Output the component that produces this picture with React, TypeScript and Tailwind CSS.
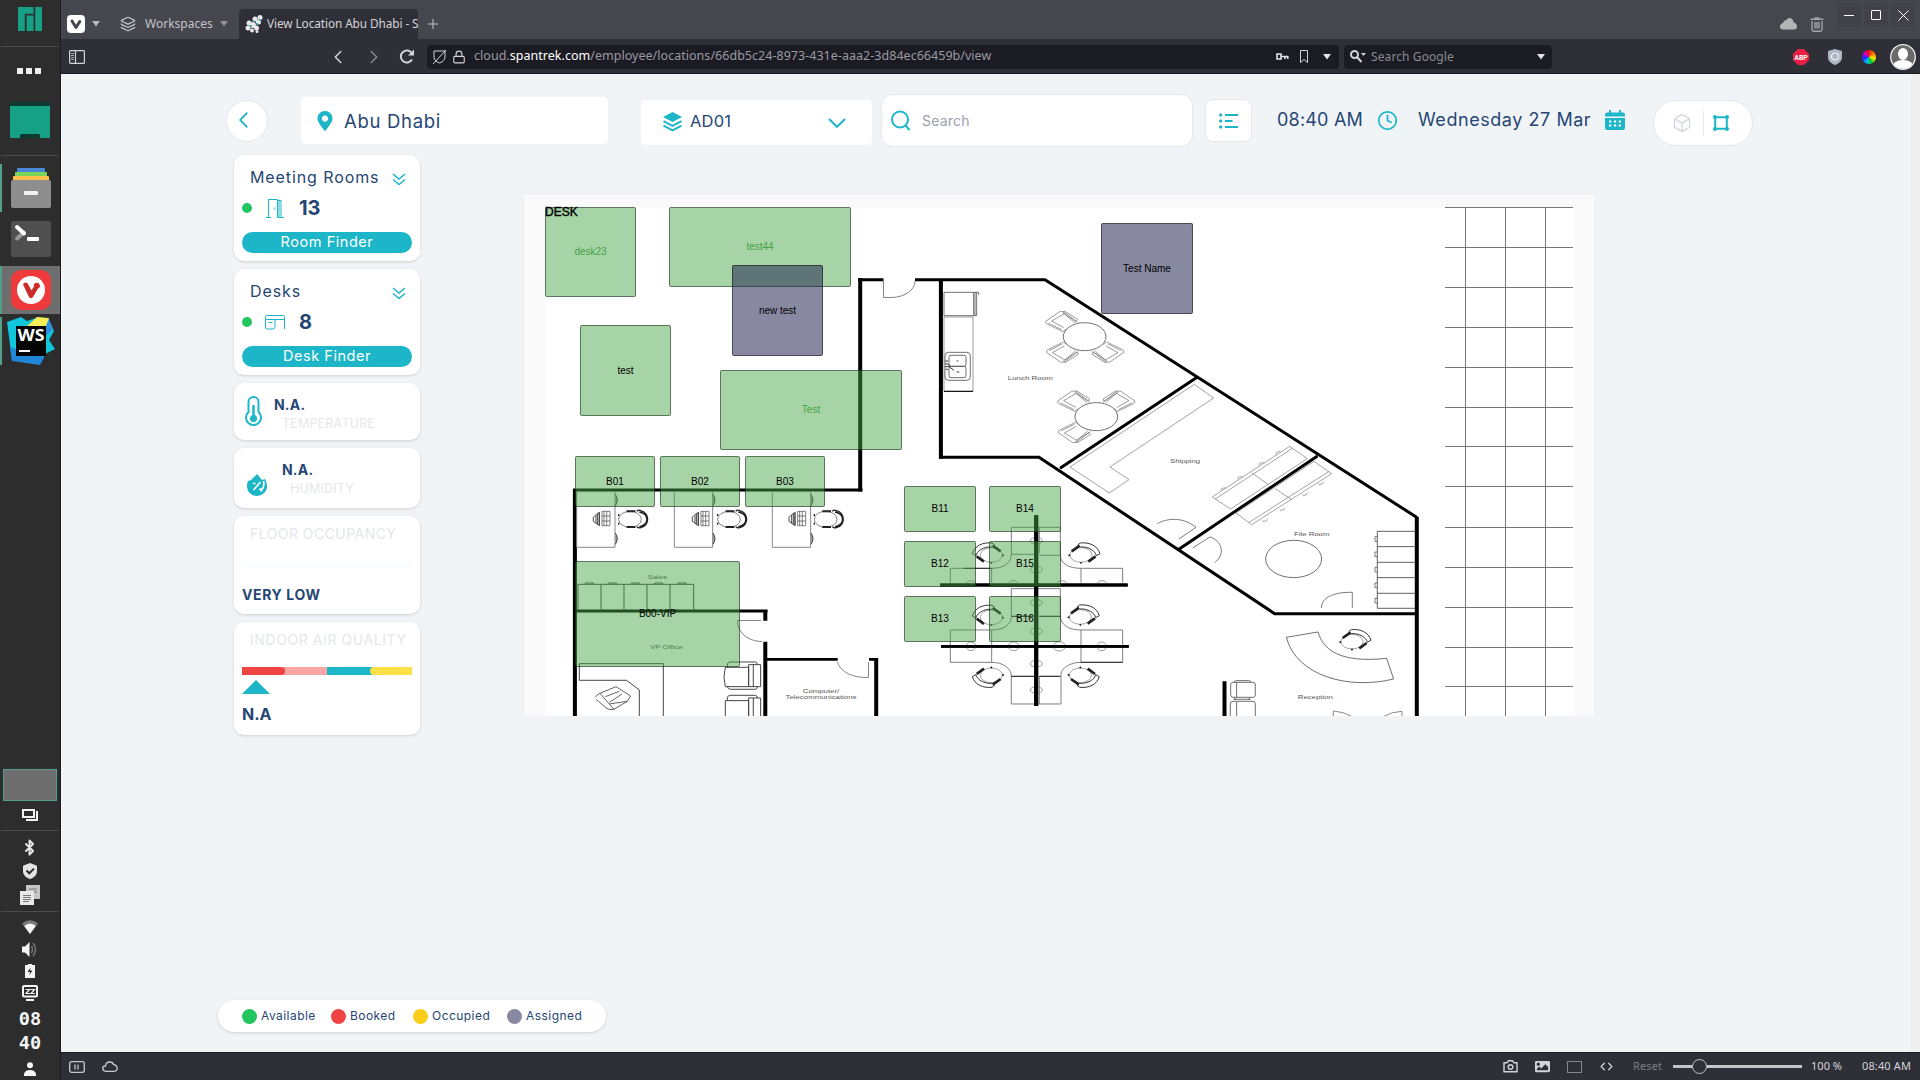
import React from "react";
import {
  Bluetooth,
  Box,
  ChevronLeft,
  ChevronRight,
  Clock,
  Code,
  Layers,
  Lock,
  Plus,
} from "lucide-react";
import { FaCamera, FaMapMarkerAlt, FaCloud, FaImage } from "react-icons/fa";

const TEAL = "#1cb6c8";

/* ---------- Desktop dock ---------- */

function DockSlot({ children, active, running }: { children: React.ReactNode; active?: boolean; running?: boolean }) {
  return (
    <div
      className={
        "flex h-12 w-full items-center justify-center border-l-2 " +
        (running ? "border-[#52a08c] " : "border-transparent ") +
        (active ? "bg-[#6e6e6e]" : "")
      }
    >
      {children}
    </div>
  );
}

function Rule() {
  return <div className="mx-px h-px shrink-0 bg-[#4b4b4b]" />;
}

function Dock() {
  return (
    <div className="flex w-[61px] shrink-0 flex-col border-r border-[#1c1c1c] bg-[#2d2d2d]">
      <div className="flex h-[46px] justify-center pt-[7px]">
        <svg width="24" height="24" viewBox="0 0 24 24" fill="#16a085">
          <path d="M0 0h15.500v6.700H6.800V24H0zM8.600 8.600h6.900V24H8.600zM17.200 0H24v24h-6.800z" />
        </svg>
      </div>
      <Rule />
      <div className="flex h-12 items-center justify-center gap-[3px] pr-[3px]">
        <i className="size-[6px] bg-[#eee]" />
        <i className="size-[6px] bg-[#eee]" />
        <i className="size-[6px] bg-[#eee]" />
      </div>
      <div className="flex h-[60px] justify-center pt-[7px]">
        <svg width="40" height="36" viewBox="0 0 40 36">
          <rect width="40" height="36" rx="1.500" fill="#0d3b31" />
          <path d="M0 4h40v31q0 1-1 1h-9v-3q0-1-1-1H11q-1 0-1 1v3H1q-1 0-1-1z" fill="#16a085" />
        </svg>
      </div>
      <Rule />
      <div className="mt-2 flex flex-col gap-[3px]">
        <DockSlot running>
          <svg width="40" height="41" viewBox="0 0 40 41">
            <rect x="6" width="28" height="8" rx="1" fill="#4a86d8" />
            <rect x="4" y="4" width="32" height="8" rx="1" fill="#7bd657" />
            <rect x="2" y="8" width="36" height="8" rx="1" fill="#fbc04b" />
            <rect y="12" width="40" height="28" rx="2" fill="#8e8e8e" />
            <rect x="13" y="23" width="14" height="4" rx="1" fill="#f2f2f2" />
          </svg>
        </DockSlot>
        <DockSlot>
          <svg width="40" height="36" viewBox="0 0 40 36">
            <rect width="40" height="36" rx="2" fill="#4f4f4f" />
            <path d="M6 17.500l7-6" stroke="#9a9a9a" strokeWidth="4" strokeLinecap="round" />
            <path d="M6 6l7 6.500" stroke="#fff" strokeWidth="4" strokeLinecap="round" />
            <rect x="16" y="16" width="12" height="4" rx="1" fill="#fff" />
          </svg>
        </DockSlot>
        <DockSlot running active>
          <svg width="40" height="40" viewBox="0 0 40 40">
            <rect width="40" height="40" rx="10" fill="#ee3a3a" />
            <circle cx="20" cy="20" r="14" fill="#fff" />
            <path d="M12 14.500q2-3.500 5-.5l3.500 6.500 2.500-4a3 3 0 1 1 4 2l-5 8.500q-2 2.500-4 0z" fill="#cf2b2b" />
          </svg>
        </DockSlot>
        <DockSlot running>
          <svg width="48" height="48" viewBox="0 0 48 48">
            <path d="M0 5L14 0l6 4 9-3 12 0 6 13-5 9 6 9-12 6-4 9-27-4z" fill="#0fc6dc" />
            <path d="M5 44L3 30l20 8 16-1-6 11z" fill="#2086d7" />
            <path d="M20 9l10-9 12 2 4 10-6 6z" fill="#2f8fd8" />
            <path d="M20 9l10-9 12 1-3 8z" fill="#f3ee56" />
            <rect x="9" y="9" width="30" height="30" fill="#050505" />
            <rect x="12" y="33" width="11" height="2" fill="#fff" />
            <text x="10.500" y="24" fontFamily="Open Sans" fontWeight="700" fontSize="15.500" textLength="27" lengthAdjust="spacingAndGlyphs" fill="#fff">WS</text>
          </svg>
        </DockSlot>
      </div>

      <div className="mt-auto flex flex-col">
        <div className="mx-[3px] h-8 border border-[#52a08c] bg-[#6e6e6e]" />
        <div className="flex h-[29px] items-center justify-center pb-[2px]">
          <svg width="16" height="12" viewBox="0 0 16 12" fill="none" stroke="#f4f4f4" strokeWidth="2">
            <path d="M1 1h11v7H1z" />
            <path d="M14 3h1v8H4" />
          </svg>
        </div>
        <Rule />
        <div className="mt-1 flex h-[76px] flex-col items-center">
          <div className="flex h-6 items-center pr-[2px]"><Bluetooth size={17} strokeWidth={2.800} color="#e4e4e4" /></div>
          <div className="flex h-6 items-center">
            <svg width="14" height="16" viewBox="0 0 14 16">
              <path d="M7 0l7 2.700V8c0 4-3 6.800-7 8-4-1.200-7-4-7-8V2.700z" fill="#e4e4e4" />
              <path d="M3.500 7.500l2.800 2.800 4.700-4.700" fill="none" stroke="#2d2d2d" strokeWidth="2" />
            </svg>
          </div>
          <div className="flex h-6 items-center">
            <svg width="20" height="20" viewBox="0 0 20 20">
              <path d="M6 0h14v14H6z" fill="#c4c4c4" />
              <path d="M0 6h14v14H0z" fill="#e8e8e8" />
              <path d="M9 4h8M14 7h3M3 10.500h8M3 12.500h8M3 14.500h8M3 16.500h6" stroke="#777" />
            </svg>
          </div>
        </div>
        <Rule />
        <div className="mt-1 flex flex-col items-center">
          <div className="flex h-[22px] items-center">
            <svg width="16" height="14" viewBox="0 0 16 14">
              <path d="M0 3.500Q8-3 16 3.500L8 14z" fill="#7a7a7a" />
              <path d="M2.200 6Q8 1 13.800 6L8 14z" fill="#f4f4f4" />
            </svg>
          </div>
          <div className="flex h-[22px] items-center">
            <svg width="16" height="15" viewBox="0 0 16 15">
              <path d="M0 4.500h3L7.500 0v15L3 10.500H0z" fill="#f4f4f4" />
              <path d="M9.500 4q2 3.500 0 7M11 1q5 6.500 0 13" fill="none" stroke="#777" strokeWidth="1.500" />
            </svg>
          </div>
          <div className="flex h-[22px] items-center">
            <svg width="10" height="14" viewBox="0 0 10 14">
              <path d="M3 0h4v1h3v13H0V1h3z" fill="#f4f4f4" />
              <path d="M5.500 3.500L2.500 8H5l-.5 3L7.500 6.500H5z" fill="#2d2d2d" />
            </svg>
          </div>
          <div className="flex h-[22px] items-center">
            <svg width="16" height="16" viewBox="0 0 16 16" fill="none" stroke="#f4f4f4">
              <rect x="1" y="1" width="14" height="10.500" rx="1" strokeWidth="2" />
              <path d="M3.500 4.500h4l-3.500 4h4M8.500 4.500h4l-3.500 4h4" strokeWidth="1.200" />
              <path d="M4 15h8" strokeWidth="2" />
            </svg>
          </div>
          <div className="flex h-[54px] flex-col items-center pt-[3px] font-['DejaVu_Sans_Mono',monospace] text-[18.500px] leading-[24px] font-bold text-[#f4f4f4]">
            <span>08</span>
            <span>40</span>
          </div>
          <div className="flex h-[22px] items-center pb-px">
            <svg width="12" height="14" viewBox="0 0 12 14" fill="#f4f4f4">
              <circle cx="6" cy="3.200" r="3" />
              <path d="M0 14v-2q1-4 6-4t6 4v2z" />
            </svg>
          </div>
        </div>
      </div>
    </div>
  );
}

/* ---------- Browser chrome ---------- */

function Caret({ color = "#b9b9bd" }: { color?: string }) {
  return (
    <svg width="8" height="6" viewBox="0 0 8 6" fill={color}>
      <path d="M0 0h8L4 5.500z" />
    </svg>
  );
}

function TabBar() {
  return (
    <div className="flex h-[39px] shrink-0 bg-[#46464e] text-[12px] text-[#c3c3c8]">
      <div className="flex h-full items-center pt-[9px] pl-[6px]">
        <svg width="18" height="18" viewBox="0 0 18 18">
          <rect width="18" height="18" rx="4" fill="#fff" />
          <path d="M5 6l4 6.500L12.800 6.500" fill="none" stroke="#46464e" strokeWidth="3" strokeLinecap="round" strokeLinejoin="round" />
        </svg>
        <span className="ml-[7px]"><Caret /></span>
      </div>
      <div className="flex h-full items-center pt-[9px] pl-[20px]">
        <Layers size={16} strokeWidth={1.900} />
        <span className="ml-[9px] w-[75px]">Workspaces</span>
        <Caret color="#8e8e94" />
      </div>
      <div className="mt-[9px] ml-[11px] flex h-[30px] w-[179px] items-center rounded-t bg-[#2f2f38] pl-[6px] whitespace-nowrap">
        <svg width="18" height="18" viewBox="0 0 18 18" fill="#e9e9e9" className="shrink-0">
          <circle cx="15" cy="2.500" r="2.500" /><circle cx="10" cy="4" r="2.500" /><circle cx="13.500" cy="7" r="2.500" />
          <circle cx="4" cy="8" r="2.500" /><circle cx="8" cy="10" r="3" /><circle cx="3" cy="13" r="2.500" />
          <circle cx="11.500" cy="13" r="2.500" /><circle cx="7" cy="15.500" r="2" /><circle cx="12" cy="16.500" r="1.500" />
          <g fill="#2aa7b8"><circle cx="8" cy="6" r="1" /><circle cx="12" cy="9" r="1" /><circle cx="6" cy="11" r="1" /><circle cx="15" cy="5" r="1" /></g>
        </svg>
        <span className="ml-1 text-[11.800px] tracking-[-0.08px] text-[#d4d4d8]">View Location Abu Dhabi - S</span>
      </div>
      <div className="flex items-center pt-[9px] pl-[7px]"><Plus size={16} strokeWidth={1.500} /></div>
      <div className="ml-auto flex items-start">
        <svg className="mt-[18px]" width="17" height="12" viewBox="0 0 17 12" fill="#b4b4b8"><path d="M3.500 11.500Q0 11.300 0 8.500 0 6 3 5 3.500 2 6 2.200 8-.5 11 .3q2.500 1 2.500 4Q17 5.500 17 8.500q0 3-3 3z" /></svg>
        <svg className="mt-[17px] ml-[13px]" width="14" height="15" viewBox="0 0 14 15" fill="none" stroke="#a4a4aa" strokeWidth="1.400"><path d="M.5 2.200h13M4.500 1h5M2 4v8.500q0 1.700 1.700 1.700h6.600q1.700 0 1.700-1.700V4M5 5v6.500M7 5v6.500M9 5v6.500" /></svg>
        <div className="mt-[3px] ml-[13px] flex gap-[3px] pr-[5px]">
          <div className="flex size-6 items-center justify-center rounded bg-[#414149]"><i className="h-px w-[10px] bg-white" /></div>
          <div className="flex size-6 items-center justify-center rounded bg-[#414149]"><i className="size-[10px] rounded-[1px] border border-white" /></div>
          <div className="flex size-6 items-center justify-center rounded bg-[#414149]">
            <svg width="11" height="11" viewBox="0 0 11 11" stroke="#fff"><path d="M.5.5l10 10M10.500.5l-10 10" /></svg>
          </div>
        </div>
      </div>
    </div>
  );
}

function AddressBar() {
  return (
    <div className="flex h-[35px] shrink-0 items-center border-b border-[#1b1b22] bg-[#2f2f38] pt-px text-[12px] text-[#d4d4d8]">
      <svg className="ml-2" width="16" height="14" viewBox="0 0 16 14" fill="none" stroke="#d4d4d8" strokeWidth="1.200">
        <rect x=".6" y=".6" width="14.800" height="12.800" rx="1" />
        <path d="M6.500 0v14" />
        <path d="M2 3.500h3M2 5.500h3M2 7.500h3M2 9.500h3" strokeWidth=".8" />
      </svg>
      <ChevronLeft className="ml-[242px]" size={22} strokeWidth={1.700} />
      <ChevronRight className="ml-[14px]" size={22} strokeWidth={1.700} color="#88888e" />
      <svg className="ml-[14px]" width="16" height="15" viewBox="0 0 16 15" fill="none" stroke="#d4d4d8" strokeWidth="2">
        <path d="M13 4.500A6 6 0 1 0 13 10.500" />
        <path d="M15 .5v6H9z" fill="#d4d4d8" stroke="none" />
      </svg>
      <div className="ml-[12px] flex h-6 w-[912px] items-center rounded-[4px] bg-[#1b1b24] pl-[6px]">
        <svg width="13" height="14" viewBox="0 0 13 14" fill="none" stroke="#d4d4d8">
          <path d="M1 1h11v6c0 3-2.500 5-5.500 6C3.500 12 1 10 1 7zM0 14L13 0" />
        </svg>
        <Lock className="ml-[6px]" size={14} strokeWidth={1.900} />
        <span className="ml-[8px] w-[802px] text-[12.500px] tracking-[0.03px] whitespace-nowrap text-[#9a9aa2]">
          cloud.<span className="text-white">spantrek.com</span>/employee/locations/66db5c24-8973-431e-aaa2-3d84ec66459b/view
        </span>
        <svg width="13" height="8" viewBox="0 0 13 8" fill="none" stroke="#e4e4e8" strokeWidth="1.600">
          <path d="M1 1h4v5H1zM5 3.500h7.500M9 3.500V6M11.800 3.500V6" />
        </svg>
        <svg className="ml-[11px]" width="8" height="13" viewBox="0 0 8 13" fill="none" stroke="#d4d4d8"><path d="M.5.500h7v12L4 9.500.5 12.500z" /></svg>
        <span className="ml-[15px]"><Caret color="#e4e4e8" /></span>
      </div>
      <div className="ml-[5px] flex h-6 w-[208px] items-center rounded-[4px] bg-[#1b1b24] pl-[6px]">
        <svg width="16" height="13" viewBox="0 0 16 13" fill="none" stroke="#d4d4d8" strokeWidth="2"><circle cx="4.500" cy="4.500" r="3.500" /><path d="M7 7l4.500 5" /><path d="M11 3h5l-2.500 3z" fill="#d4d4d8" stroke="none" /></svg>
        <span className="ml-[5px] w-[166px] tracking-[0.1px] text-[#8a8a92]">Search Google</span>
        <Caret color="#e4e4e8" />
      </div>
      <div className="ml-auto flex items-center pr-1">
        <svg width="16" height="16" viewBox="0 0 16 16"><path d="M5 0h6l5 5v6l-5 5H5l-5-5V5z" fill="#ed1e45" /><text x="1.300" y="10.700" fontSize="7.200" fontWeight="700" fontFamily="Roboto" textLength="13.500" lengthAdjust="spacingAndGlyphs" fill="#fff">ABP</text></svg>
        <svg className="ml-[19px]" width="14" height="16" viewBox="0 0 14 16"><path d="M7 0l7 2v6c0 4-3 6.500-7 8-4-1.500-7-4-7-8V2z" fill="#aeb7c4" /><circle cx="7" cy="7.500" r="3.500" fill="none" stroke="#f1f3f6" strokeWidth="1.200" /></svg>
        <div className="ml-[20px] size-[14px] rounded-full bg-[conic-gradient(#ee2222,#ff7700,#ffee00,#00cc22,#00bbff,#2222ff,#cc00cc,#ff0000)]" />
        <svg className="ml-[14px]" width="26" height="26" viewBox="0 0 26 26"><circle cx="13" cy="13" r="12.300" fill="#6a6a6a" stroke="#eee" strokeWidth="1.300" /><ellipse cx="13" cy="10" rx="5" ry="6" fill="#fff" /><path d="M3.500 20q3-4 9.500-4t9.500 4A12 12 0 0 1 3.500 20z" fill="#fff" /></svg>
      </div>
    </div>
  );
}

function StatusBar() {
  return (
    <div className="flex h-7 shrink-0 items-center border-t border-[#1b1b22] bg-[#2f2f38] text-[11px] text-[#d4d4d8]">
      <svg className="ml-2" width="16" height="12" viewBox="0 0 16 12" fill="none" stroke="#c8c8cc" strokeWidth="1.300"><rect x=".7" y=".7" width="14.600" height="10.600" rx="2" /><path d="M6 3.500v5M9 3.500v5" /></svg>
      <svg className="ml-[17px]" width="16" height="11" viewBox="0 0 16 11" fill="none" stroke="#c8c8cc" strokeWidth="1.300"><path d="M4 10.300Q.7 10 .7 7.500T3.500 5Q4 1 7.500 1T11.500 3.500Q15 4 15.200 7.500 15 10 12.500 10.300z" /></svg>
      <div className="ml-auto flex items-center pr-[9px]">
        <svg width="15" height="13" viewBox="0 0 15 13" fill="none" stroke="#d4d4d8" strokeWidth="1.400"><path d="M1 2.800h3l1.500-2h4l1.500 2h3v9H1z" /><circle cx="7.500" cy="7" r="2.300" /></svg>
        <FaImage className="ml-[17px]" size={15} />
        <i className="ml-[17px] h-[12px] w-[15px] border border-[#85858c]" />
        <Code className="ml-[18px]" size={13} strokeWidth={2.200} />
        <span className="ml-[20px] tracking-[0.1px] text-[#7d7d85]">Reset</span>
        <div className="ml-[11px] flex h-4 w-[129px] items-center">
          <i className="h-[3px] w-[19px] bg-[#c4c4c8]" />
          <i className="size-[15px] rounded-full border border-[#c4c4c8] bg-[#2f2f38]" />
          <i className="h-[3px] flex-1 bg-[#c4c4c8]" />
        </div>
        <span className="ml-[9px] w-[51px]">100 %</span>
        <span className="tracking-[0.12px]">08:40 AM</span>
      </div>
    </div>
  );
}

/* ---------- Location header ---------- */

function Header() {
  return (
    <div className="flex items-start pl-[165px] text-[#264674]">
      <button className="mt-[26px] flex size-[42px] items-center justify-center rounded-full border border-gray-200 bg-white pr-[7px] pb-[3px]">
        <svg width="9" height="16" viewBox="0 0 9 16" fill="none" stroke={TEAL} strokeWidth="1.800"><path d="M8.300.7L1.200 8l7.100 7.300" /></svg>
      </button>
      <div className="mt-[23px] ml-[33px] flex h-[47px] w-[307px] items-center rounded-[5px] bg-white pl-[16px]">
        <FaMapMarkerAlt size={20} color={TEAL} className="w-4" />
        <span className="ml-[11px] pt-[2px] text-[18.500px] tracking-[0.7px]">Abu Dhabi</span>
      </div>
      <div className="mt-[26px] ml-[33px] flex h-[45px] w-[231px] items-center rounded-[5px] bg-white pl-[22px]">
        <svg width="19" height="20" viewBox="0 0 19 20" className="mb-px">
          <path d="M9.500 0L19 5 9.500 10 0 5z" fill={TEAL} />
          <path d="M.5 9.200l9 4.600 9-4.600M.5 13.700l9 4.600 9-4.600" fill="none" stroke={TEAL} strokeWidth="2" />
        </svg>
        <span className="ml-[8px] w-[138px] pb-[3px] text-[16.500px] tracking-[0.2px]">AD01</span>
        <svg width="18" height="10" viewBox="0 0 18 10" fill="none" stroke={TEAL} strokeWidth="2"><path d="M1 1l8 7.800L17 1" /></svg>
      </div>
      <div className="mt-[20px] ml-[9px] flex h-[53px] w-[312px] items-center rounded-[12px] border border-gray-200 bg-white pl-[9px]">
        <svg width="20" height="21" viewBox="0 0 20 21" fill="none" stroke={TEAL} strokeWidth="2"><circle cx="9" cy="9.500" r="8" /><path d="M14.500 15.500l4 4.500" /></svg>
        <span className="ml-[11px] text-[14px] tracking-[0.2px] text-gray-400">Search</span>
      </div>
      <div className="mt-[25px] ml-[12px] flex h-[43px] w-[47px] items-center justify-center rounded-[8px] border border-gray-200 bg-white">
        <svg width="19" height="16" viewBox="0 0 19 16" fill={TEAL} stroke={TEAL}>
          <circle cx="1.700" cy="2" r="1.200" /><circle cx="1.700" cy="8" r="1.200" /><circle cx="1.700" cy="14" r="1.200" />
          <path d="M6 2h13M6 8h7.500M6 14h13" strokeWidth="2" />
        </svg>
      </div>
      <span className="mt-[32px] ml-[25px] w-[101px] text-[18px] leading-[28px] tracking-[0.2px] whitespace-nowrap">08:40 AM</span>
      <Clock className="mt-[36px] -ml-px" size={21} strokeWidth={2} color={TEAL} />
      <span className="mt-[32px] ml-[20px] w-[187px] text-[18px] leading-[28px] tracking-[0.55px] whitespace-nowrap">Wednesday 27 Mar</span>
      <svg className="mt-[36px]" width="20" height="20" viewBox="0 0 20 20">
        <path d="M0 5q0-2.500 2.500-2.500h15Q20 2.500 20 5v1.500H0zM0 8h20v9.500q0 2.500-2.500 2.500h-15Q0 20 0 17.500zM4 0h2v4H4zM14 0h2v4h-2z" fill={TEAL} />
        <path d="M4 11.500h2.300M8.900 11.500h2.300M13.700 11.500H16M4 15.500h2.300M8.900 15.500h2.300M13.700 15.500H16" stroke="#fff" strokeWidth="2" />
      </svg>
      <div className="mt-[26px] ml-[28px] flex h-[46px] w-[100px] items-center rounded-full border border-gray-200 bg-white pl-[18px]">
        <Box size={20} strokeWidth={1.500} color="#d1d5db" />
        <i className="ml-[11px] h-6 w-px bg-gray-200" />
        <svg className="ml-[9px]" width="16" height="16" viewBox="0 0 16 16" fill="none" stroke={TEAL} strokeWidth="2">
          <path d="M2.200 2.200h11.600v11.600H2.200z" />
          <g fill={TEAL} stroke="none"><circle cx="2" cy="2" r="2" /><circle cx="14" cy="2" r="2" /><circle cx="2" cy="14" r="2" /><circle cx="14" cy="14" r="2" /></g>
        </svg>
      </div>
    </div>
  );
}

/* ---------- Side cards ---------- */

function Card({ className, children }: { className: string; children: React.ReactNode }) {
  return <div className={"rounded-[10px] bg-white px-2 shadow-[0_1px_3px_rgba(0,0,0,0.14)] " + className}>{children}</div>;
}

function CountCard({ title, count, action, icon }: { title: string; count: string; action: string; icon: React.ReactNode }) {
  return (
    <Card className="h-[106px]">
      <div className="flex items-center justify-between pt-[10px] pr-[6px] pl-2">
        <span className="text-[16px] leading-[25px] tracking-[0.9px] whitespace-nowrap">{title}</span>
        <svg width="14" height="13" viewBox="0 0 14 13" fill="none" stroke={TEAL} strokeWidth="1.500" className="mt-[4px] shrink-0">
          <path d="M1 1l6 5 6-5M1 6.500l6 5 6-5" />
        </svg>
      </div>
      <div className="flex h-[36px] items-center">
        <i className="size-[10px] rounded-full bg-[#22c55e]" />
        <span className="ml-[13px] w-[34px]">{icon}</span>
        <span className="text-[20px] font-bold">{count}</span>
      </div>
      <div className="mt-[6px] h-[21px] rounded-full bg-[#1cb6c8] text-center text-[14.500px] leading-[20px] tracking-[0.55px] text-white">{action}</div>
    </Card>
  );
}

function SideCards() {
  return (
    <div className="flex w-[186px] flex-col gap-2 text-[#264674]">
      <CountCard
        title="Meeting Rooms"
        count="13"
        action="Room Finder"
        icon={
          <svg width="18" height="19" viewBox="0 0 18 19" fill="none" stroke={TEAL} className="ml-px"><path d="M0 18.500h5M12 18.500h6M2.500 18.500V.5h9v18M11.500 1.500h3.500v17M13 2v16M8.300 8.500v2" /></svg>
        }
      />
      <CountCard
        title="Desks"
        count="8"
        action="Desk Finder"
        icon={
          <svg width="20" height="15" viewBox="0 0 20 15" fill="none" stroke={TEAL}><path d="M.5 4.500v-3q0-1 1-1h17q1 0 1 1V14M.5 4.500H19M.500 4.500V12q0 2 2 2h5q2.500 0 2.500-2.500v-7M3.500 7.500h4" /></svg>
        }
      />
      <Card className="flex h-[57px]">
        <svg width="17" height="33" viewBox="0 0 17 33" className="mt-3 ml-[3px]">
          <path d="M3.500 7a5 5 0 0 1 10 0v10a7.500 7.500 0 1 1-10 0z" fill="none" stroke={TEAL} strokeWidth="2" />
          <circle cx="8.500" cy="23.500" r="3.500" fill={TEAL} /><path d="M8.500 10v13" stroke={TEAL} strokeWidth="2.500" />
        </svg>
        <div className="pt-[13px] pl-[12px]">
          <div className="text-[14px] leading-[18px] font-bold tracking-[0.2px]">N.A.</div>
          <div className="pl-2 text-[12.500px] leading-[19px] tracking-[0.2px] text-gray-200">TEMPERATURE</div>
        </div>
      </Card>
      <Card className="flex h-[60px]">
        <svg width="20" height="22" viewBox="0 0 20 22" className="mt-[26px] ml-[5px]">
          <path d="M10 0l5 6 3-1q2 3 2 7a10 9.500 0 0 1-20 1q0-4 1-6l3-1z" fill={TEAL} />
          <path d="M6.500 16l7-8M6 9.500h2.500M12 15h2.500M16.500 7q1.500 6-3 10.500" stroke="#fff" strokeWidth="1.600" fill="none" />
        </svg>
        <div className="pt-[13px] pl-[15px]">
          <div className="text-[14px] leading-[18px] font-bold tracking-[0.2px]">N.A.</div>
          <div className="pl-2 text-[12.500px] leading-[19px] tracking-[0.2px] text-gray-200">HUMIDITY</div>
        </div>
      </Card>
      <Card className="h-[98px]">
        <div className="pt-[8px] pl-2 text-[14px] leading-[20px] tracking-[0.45px] whitespace-nowrap text-gray-200">FLOOR OCCUPANCY</div>
        <div className="mt-[17px] h-2 bg-[#fafeff]" />
        <div className="mt-[16px] text-[14px] leading-[20px] font-bold tracking-[0.6px]">VERY LOW</div>
      </Card>
      <Card className="h-[113px]">
        <div className="pt-[8px] pl-2 text-[14px] leading-[20px] tracking-[0.58px] whitespace-nowrap text-gray-200">INDOOR AIR QUALITY</div>
        <div className="mt-[17px] flex h-2">
          <div className="h-full w-1/4 bg-[#fca5a5]"><div className="h-full rounded-r-full bg-[#ef4444]" /></div>
          <div className="h-full w-1/4 bg-[#fca5a5]" />
          <div className="h-full w-1/4 bg-[#1cb6c8]" />
          <div className="h-full w-1/4 bg-[#1cb6c8]"><div className="h-full rounded-l-full bg-[#fddf47]" /></div>
        </div>
        <svg width="28" height="14" viewBox="0 0 28 14" className="mt-[5px]"><path d="M14 0l14 14H0z" fill={TEAL} /></svg>
        <div className="mt-[8px] text-[16px] leading-[24px] font-bold">N.A</div>
      </Card>
    </div>
  );
}

/* ---------- Floor plan ---------- */

const ORIGIN = { x: 545, y: 207 };

type Desk = { label: string; x: number; y: number; w: number; h: number; assigned?: boolean; green?: boolean };

const DESKS: Desk[] = [
  { label: "desk23", x: 545, y: 207, w: 91, h: 90, green: true },
  { label: "test44", x: 669, y: 207, w: 182, h: 80, green: true },
  { label: "new test", x: 732, y: 265, w: 91, h: 91, assigned: true },
  { label: "test", x: 580, y: 325, w: 91, h: 91 },
  { label: "Test", x: 720, y: 370, w: 182, h: 80, green: true },
  { label: "Test Name", x: 1101, y: 223, w: 92, h: 91, assigned: true },
  { label: "B01", x: 575, y: 456, w: 80, h: 51 },
  { label: "B02", x: 660, y: 456, w: 80, h: 51 },
  { label: "B03", x: 745, y: 456, w: 80, h: 51 },
  { label: "B00-VIP", x: 575, y: 561, w: 165, h: 106 },
  { label: "B11", x: 904, y: 486, w: 72, h: 46 },
  { label: "B12", x: 904, y: 541, w: 72, h: 46 },
  { label: "B13", x: 904, y: 596, w: 72, h: 46 },
  { label: "B14", x: 989, y: 486, w: 72, h: 46 },
  { label: "B15", x: 989, y: 541, w: 72, h: 46 },
  { label: "B16", x: 989, y: 596, w: 72, h: 46 },
];

function RoomName({ x, y, w, children }: { x: number; y: number; w: number; children: string }) {
  return (
    <text x={x - w / 2} y={y + 2} textLength={w} lengthAdjust="spacingAndGlyphs" fontFamily="Liberation Sans" fontSize="5.300" fill="#555">
      {children}
    </text>
  );
}

function LoungeChair({ x, y, sx = 1, sy = 1 }: { x: number; y: number; sx?: number; sy?: number }) {
  return (
    <g transform={`translate(${x} ${y}) scale(${sx} ${sy})`} fill="none" stroke="#777" strokeWidth="2.200">
      <path d="M-48 -1L-6 -30Q0 -32 6 -30L48 2M-48 -1Q-48 6 -42 8L4 30L14 22M-30 -2L8 -24L40 4M-40 4L0 24M-30 -2L6 18" />
      <path d="M8 -32L48 -7L44 0L4 -26z" />
    </g>
  );
}

function TaskChair({ x, y, sx = 1, sy = 1 }: { x: number; y: number; sx?: number; sy?: number }) {
  return (
    <g transform={`translate(${x} ${y}) scale(${sx} ${sy})`} fill="none">
      <ellipse rx="33" ry="22" stroke="#777" strokeWidth="2" />
      <path d="M-57 -4C-50 -28 -25 -39 2 -36L10 -30M-57 -4L-46 2M-46 2C-44 -12 -22 -26 2 -24" stroke="#333" strokeWidth="3" />
      <path d="M4 -28L28 -11M-44 4L-22 20" stroke="#222" strokeWidth="8" />
      <path d="M33 -1l4 4M-2 22l4 3" stroke="#222" strokeWidth="5" />
    </g>
  );
}

function Workstation({ x, pc }: { x: number; pc: number }) {
  return (
    <g transform={`translate(${x} 0)`} fill="none" stroke="#444" strokeWidth="2">
      <path d="M0 155H115V322H0z" stroke="#888" strokeWidth="3" />
      <path d="M116 163q12 17 0 34M116 279q12 17 0 34" strokeWidth="3" fill="#999" />
      <g transform={`translate(${pc} 0)`}>
        <path d="M50 232L56 226L68 217V257L56 248L50 244zM58 226V250M63 221V254M68 217V257" strokeWidth="3" />
        <path d="M76 214h24v43H76zM82 214v43M90 214v43M76 228h24M76 243h24" />
      </g>
      <g transform={`translate(${pc} 0)`}>
        <path d="M150 214h26M150 261h26" stroke="#111" strokeWidth="6" />
        <ellipse cx="160" cy="238" rx="34" ry="24" />
        <path d="M188 216C218 222 218 254 188 260M180 214Q186 208 192 212C220 218 220 258 192 263Q186 265 180 260M126 222v6M126 248v6" stroke="#222" strokeWidth="4" />
      </g>
    </g>
  );
}

function PlanDrawing() {
  return (
    <svg width="1029" height="509" viewBox="545 207 1029 509" className="block">
      <path
        d="M1465.500 207V716M1505.500 207V716M1545.500 207V716M1445 207.500H1573M1445 247.500H1573M1445 287.500H1573M1445 327.500H1573M1445 367.500H1573M1445 407.500H1573M1445 446.500H1573M1445 486.500H1573M1445 527.500H1573M1445 567.500H1573M1445 607.500H1573M1445 647.500H1573M1445 686.500H1573"
        stroke="#777"
        fill="none"
      />
      <g fill="none" stroke="#000" strokeWidth="2.800">
        <path d="M858 279.700H883.500M915 279.700H1045L1417 517.500M939 457.300H1039L1274.700 613.700H1417M1060 468.300L1196.700 377.500M1178.500 549.500L1317.500 456" strokeWidth="3" />
        <path d="M573 490H862.500M573 611H767.500M765 659.300H837.700M869 659.300H878" />
        <path d="M860.200 278.300V491.400M940.900 279V458.700M1416.800 517V716M574.900 489V716M765.300 610V620.700M765.300 641.700V716M876.200 658V716M1224.500 681.300V716M1036.200 515.300V706" strokeWidth="4" />
        <path d="M940.300 585H1127.700M941 646.300H1128.700" />
      </g>

      <g fill="none" stroke="#666" strokeWidth=".8">
        <path d="M883.500 281V297.500H892C905 297 915 290 915 281" />
        <path d="M761 620.500H737.500C737 632 748 641.500 762 641.500" />
        <path d="M837.500 662C840 672 853 678 868.500 677.500V662" />
      </g>

      {/* sales and VP office */}
      <g transform="translate(540 440) scale(.3333)" fill="none" stroke="#444" strokeWidth="3">
        <Workstation x={110} pc={0} />
        <Workstation x={403} pc={4} />
        <Workstation x={697} pc={0} />
        <path d="M114 511V433H461V511M183 433V511M252 433V511M321 433V511M390 433V511M136 433v-4h24v4M205 433v-4h24v4M275 433v-4h24v4M344 433v-4h24v4M414 433v-4h24v4" />
        <path d="M118 671H370V830M118 671V721H260L298 750V830" />
        <path d="M166 772Q170 764 180 760L228 740L272 768L262 784L222 808Q206 812 196 802L168 778M180 760L208 792L262 784M196 770L238 754M210 786L246 762M208 792L222 808" strokeWidth="2.500" />
        <path d="M556 682h70v58h-70Q548 712 556 682M562 682v-10q2-6 10-6h74q6 0 6 8M562 740q2 8 10 8h74q6 0 6-8M626 674h36v66h-36zM640 674v66" />
        <path d="M556 830V782h70v48M562 782v-10q2-6 10-6h74q6 0 6 8M626 774h36v56M626 774v56M640 774v56" />
      </g>
      <RoomName x={657.500} y={577} w={19.500}>Sales</RoomName>
      <RoomName x={666.500} y={646.700} w={33}>VP Office</RoomName>
      <RoomName x={821} y={691} w={36.500}>Computer/</RoomName>
      <RoomName x={821} y={697.300} w={71}>Telecommunications</RoomName>

      {/* lunch room */}
      <g transform="translate(880 260) scale(.3333)" fill="none" stroke="#555" strokeWidth="2.500">
        <path d="M192 97H281V167H192zM281 97H290V167H281M285 97V167M290 97h6v8" />
        <path d="M192 171H279V394M192 171V394" stroke="#888" />
        <path d="M192 394H279" stroke="#000" strokeWidth="3.500" />
        <rect x="195" y="277" width="76" height="84" rx="10" />
        <rect x="207" y="286" width="51" height="33" rx="6" />
        <rect x="207" y="319" width="51" height="34" rx="6" />
        <path d="M230 303h5M230 336h8M196 303h8M196 312h8M196 320h8M198 328h6M204 318l18 13M205 312l5 8" stroke="#333" strokeWidth="3" />
        <ellipse cx="614" cy="230" rx="64" ry="42" />
        <ellipse cx="649" cy="470" rx="64" ry="42" />
        <LoungeChair x={545} y={185} />
        <LoungeChair x={547} y={276} sy={-1} />
        <LoungeChair x={684} y={276} sx={-1} sy={-1} />
        <LoungeChair x={581} y={424} />
        <LoungeChair x={717} y={424} sx={-1} />
        <LoungeChair x={583} y={517} sy={-1} />
      </g>
      <RoomName x={1030.300} y={377.700} w={45}>Lunch Room</RoomName>

      {/* open-plan cubicles */}
      <g transform="translate(890 470) scale(.3333)" fill="none" stroke="#666" strokeWidth="2.500">
        <path d="M511 172H364V253C364 280 340 295 305 295H181V338M305 295V338M511 172V258C513 280 535 295 573 295H698V338M573 295V338M364 253H432M448 256H511M448 172V250" />
        <path d="M511 356H364V439C364 465 340 480 305 480H181V577H305V480M511 356V439C513 465 535 480 573 480H698V577H573V480M364 439H432M448 439H511" />
        <path d="M305 577C340 577 364 595 364 619V702H513V614C513 595 540 577 573 577M364 619H432M448 619H511M448 619V702" />
        <path d="M364 619H432M448 619H511M573 577H698M364 439H432M448 439H511M220 295H305" stroke="#111" />
        <path d="M229 338q14-12 28 0M356 338q14-12 28 0M502 338q14-12 28 0M622 338q14-12 28 0" stroke="#888" />
        <g stroke="#888">
          <ellipse cx="243" cy="529" rx="14" ry="13" /><ellipse cx="371" cy="529" rx="16" ry="13" /><ellipse cx="508" cy="529" rx="18" ry="14" /><ellipse cx="635" cy="529" rx="14" ry="13" />
          <ellipse cx="439" cy="212" rx="18" ry="10" /><ellipse cx="439" cy="299" rx="18" ry="10" /><ellipse cx="439" cy="398" rx="18" ry="10" /><ellipse cx="439" cy="484" rx="18" ry="10" /><ellipse cx="439" cy="581" rx="18" ry="10" /><ellipse cx="439" cy="660" rx="18" ry="10" />
        </g>
        <TaskChair x={304} y={255} />
        <TaskChair x={573} y={255} sx={-1} />
        <TaskChair x={304} y={442} />
        <TaskChair x={571} y={441} sx={-1} />
        <TaskChair x={304} y={616} sy={-1} />
        <TaskChair x={571} y={616} sx={-1} sy={-1} />
      </g>
      <path d="M1036.200 515.300V706" stroke="#000" strokeWidth="4" />
      <path d="M940.300 585H1127.700M941 646.300H1128.700" stroke="#000" strokeWidth="2.800" />

      {/* shipping, file room, reception */}
      <g transform="translate(1040 360) scale(.3333)" fill="none" stroke="#888" strokeWidth="2.300">
        <path d="M90 321L463 73L521 114L210 321L267 359L208 399z" />
        <path d="M517 411L749 259L802 296L572 447zM526 417L757 265M635 338L685 374" />
        <path d="M588 459L635 494L875 341L822 304zM626 488L866 335M705 386L755 419" />
        <path d="M543 392l2-6 10-3 3 4M593 358l2-6 10-3 3 4M657 316l2-6 10-3 3 4M707 283l2-6 10-3 3 4M668 481l2 4 10-3 3-6M720 448l2 4 10-3 3-6M788 403l2 4 10-3 3-6M836 370l2 4 10-3 3-6" />
        <path d="M352 491C390 470 435 475 468 502L417 537M458 564L510 531C550 545 555 585 524 608M844 744C845 710 885 696 937 697V744" stroke="#555" />
        <ellipse cx="761" cy="597" rx="84" ry="56" stroke="#444" />
        <path d="M1125 514H1012V745H1125M1012 560H1125M1012 607H1125M1012 653H1125M1012 700H1125" stroke="#333" />
        <path d="M1012 530h-7v14h7M1012 576h-7v14h7M1012 622h-7v14h7M1012 669h-7v14h7M1012 715h-7v14h7" stroke="#555" />
        <path d="M739 832L834 816C850 870 900 910 1040 895L1061 957C930 990 770 950 739 832z" stroke="#444" />
        <path d="M880 1070V1053Q910 1055 937 1070M1030 1070Q1055 1055 1086 1054V1070" stroke="#666" />
        <path d="M580 967h60q6 0 6 8v30q0 7-6 7h-60q-8 0-8-8v-30q0-7 8-7zM590 967v45M582 966q2-4 8-4h36q6 0 6 4M580 1018h52M582 1012l4 6M630 1012l-4 6M571 1070v-38q0-8 8-8h60q7 0 7 8v38M590 1026v44" stroke="#444" />
        <TaskChair x={936} y={845} sx={-1} />
      </g>
      <RoomName x={1185} y={461} w={30}>Shipping</RoomName>
      <RoomName x={1311.700} y={534.300} w={35.300}>File Room</RoomName>
      <RoomName x={1315.300} y={697.300} w={35}>Reception</RoomName>
    </svg>
  );
}

function FloorPlan() {
  return (
    <div className="h-[521px] w-[1069px] bg-[#fafafa] pt-3 pl-5 font-['Liberation_Sans',Arial,sans-serif]">
      <div className="relative h-[509px] w-[1029px] bg-white">
        <PlanDrawing />
        {DESKS.map((d) => (
          <div
            key={d.label}
            className={
              "absolute flex items-center justify-center rounded-[2px] border border-[#000000]/45 text-[10px] leading-none whitespace-nowrap " +
              (d.assigned ? "bg-[#1e1e4b]/53 " : "bg-[#48a648]/48 ") +
              (d.green ? "text-[#45a345]" : "text-black")
            }
            style={{ left: d.x - ORIGIN.x, top: d.y - ORIGIN.y, width: d.w, height: d.h }}
          >
            {d.label}
          </div>
        ))}
        <span className="absolute top-0 left-0 text-[12px] leading-[10px] text-black [-webkit-text-stroke:0.4px_black]">DESK</span>
      </div>
    </div>
  );
}

/* ---------- Legend ---------- */

function LegendItem({ color, label, width }: { color: string; label: string; width: string }) {
  return (
    <div className={"flex items-center gap-[4px] " + width}>
      <i className={"size-[15px] shrink-0 rounded-full " + color} />
      <span>{label}</span>
    </div>
  );
}

function Legend() {
  return (
    <div className="mb-[20px] ml-[157px] flex h-8 w-[388px] items-center rounded-full bg-white pl-6 text-[12px] tracking-[0.45px] text-[#264674] shadow-[0_1px_3px_rgba(0,0,0,0.14)]">
      <LegendItem color="bg-[#22c55e]" label="Available" width="w-[89px]" />
      <LegendItem color="bg-[#ef4444]" label="Booked" width="w-[82px]" />
      <LegendItem color="bg-[#facc15]" label="Occupied" width="w-[94px]" />
      <LegendItem color="bg-[#8888a0]" label="Assigned" width="w-[80px]" />
    </div>
  );
}

export default function App() {
  return (
    <div className="flex h-[1080px] w-[1920px] overflow-hidden font-['Noto_Sans',sans-serif]">
      <Dock />
      <div className="flex min-w-0 flex-1 flex-col">
        <TabBar />
        <AddressBar />
        <div className="flex min-h-0 flex-1 bg-[#f0f4f7]">
          <main className="flex flex-1 flex-col font-['Inter',sans-serif]">
            <div className="h-[81px]"><Header /></div>
            <div className="flex pl-[173px]">
              <SideCards />
              <div className="mt-[40px] ml-[105px]"><FloorPlan /></div>
            </div>
            <div className="mt-auto"><Legend /></div>
          </main>
          <div className="w-[9px] bg-[#efefef]" />
        </div>
        <StatusBar />
      </div>
    </div>
  );
}
